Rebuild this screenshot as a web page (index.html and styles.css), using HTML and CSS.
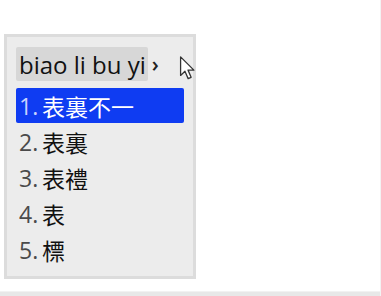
FILE: index.html
```html
<!DOCTYPE html>
<html lang="zh-Hant">
<head>
<meta charset="utf-8">
<link rel="stylesheet" href="styles.css">
</head>
<body>
<div class="screen">
  <div class="ime">
    <div class="comp">
      <span class="comp-text">biao li bu yi</span>
      <span class="chev">›</span>
    </div>
    <ol class="cands">
      <li class="cand sel"><span class="num">1.</span><span class="word">表裏不一</span></li>
      <li class="cand"><span class="num">2.</span><span class="word">表裏</span></li>
      <li class="cand"><span class="num">3.</span><span class="word">表禮</span></li>
      <li class="cand"><span class="num">4.</span><span class="word">表</span></li>
      <li class="cand"><span class="num">5.</span><span class="word">標</span></li>
    </ol>
  </div>
  <svg class="cursor" width="17" height="26" viewBox="0 0 16 24">
    <path d="M1.5 1.5 L1.5 19 L5.6 15 L8.6 22 L11.4 20.8 L8.5 14 L14 14 Z" fill="#fff" stroke="#333" stroke-width="1.2" stroke-linejoin="round"/>
  </svg>
  <div class="bottom-bar"></div>
</div>
</body>
</html>
```

FILE: styles.css
```css
html, body {
  margin: 0;
  padding: 0;
  background: #ffffff;
}
.screen {
  position: relative;
  width: 381px;
  height: 296px;
  overflow: hidden;
  padding: 34px 0 0 4px;
  box-sizing: border-box;
  border-right: 1px solid #f3f3f3;
}
.ime {
  width: 192px;
  height: 245px;
  box-sizing: border-box;
  background: #ececec;
  border: 3px solid #dcdcdc;
  padding: 10px 0 0 9px;
}
.comp {
  display: flex;
  align-items: center;
  height: 34px;
}
.comp-text {
  display: flex;
  align-items: center;
  height: 34px;
  padding: 0 2px 0 3px;
  background: #d7d7d7;
  border-radius: 2px;
  font-family: "Open Sans", "Liberation Sans", sans-serif;
  font-size: 24px;
  font-weight: 500;
  color: #111;
}
.chev {
  margin-left: 4px;
  font-family: "Open Sans", "Liberation Sans", sans-serif;
  font-size: 21px;
  font-weight: 600;
  color: #222;
  line-height: 1;
}
.cands {
  list-style: none;
  margin: 7px 0 0 0;
  padding: 0;
  width: 168px;
}
.cand {
  display: flex;
  align-items: center;
  height: 36px;
  padding-left: 3px;
  font-size: 23px;
  border-radius: 2px;
}
.num {
  font-family: "Open Sans", "Liberation Sans", sans-serif;
  font-weight: 500;
  color: #4a4a4a;
  width: 23px;
}
.word {
  font-family: "Noto Sans CJK TC", "Noto Sans CJK SC", sans-serif;
  font-weight: 400;
  color: #111;
  font-size: 23px;
}
.cand.sel {
  background: #0f3cf2;
  height: 35px;
  margin-bottom: 1px;
}
.cand.sel .num {
  color: #c9d3ff;
}
.cand.sel .word {
  color: #ffffff;
}
.cursor {
  position: absolute;
  left: 179px;
  top: 55px;
}
.bottom-bar {
  position: absolute;
  left: 0;
  right: 0;
  bottom: 0;
  height: 4px;
  background: #e8e8e8;
  border-top: 1px solid #f2f2f2;
}
```
